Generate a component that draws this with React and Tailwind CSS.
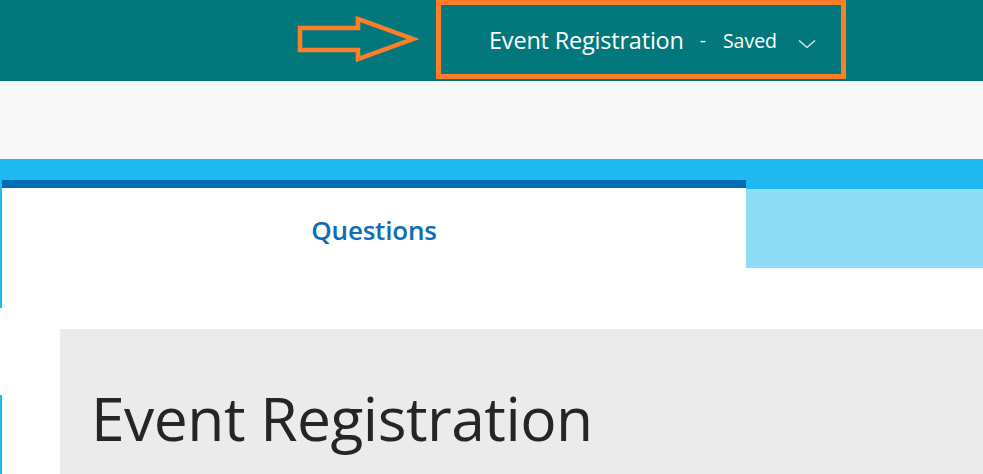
import React from 'react';

const font = { fontFamily: '"Open Sans", "Noto Sans", sans-serif' };

function Chevron() {
  return (
    <svg width="18" height="10" viewBox="0 0 18 10" fill="none" className="ml-[21px] mt-[6px]">
      <path d="M1 1.5 L9 8.5 L17 1.5" stroke="#e8f4f4" strokeWidth="1.3" />
    </svg>
  );
}

function Arrow() {
  return (
    <svg width="130" height="50" viewBox="0 0 130 50" fill="none" className="mt-[14px] ml-[296px]">
      {/* outline arrow pointing at the title */}
      <path
        d="M4 14 L62 14 L62 5 L117 25 L62 45 L62 36 L4 36 Z"
        stroke="#fe7f27"
        strokeWidth="4.5"
        strokeLinejoin="miter"
      />
    </svg>
  );
}

export default function App() {
  return (
    <div className="h-[474px] w-[983px] overflow-hidden bg-white" style={font}>
      {/* Header */}
      <div className="h-[81px] bg-[#03787c] flex items-start">
        <Arrow />
        <div className="ml-[10px] h-[79px] w-[410px] border-[5px] border-[#fe7f27] flex items-center pl-[48px] pt-[2px] text-white">
          <span className="text-[23.5px] tracking-[-0.2px]">Event Registration</span>
          <span className="ml-[16px] text-[19px]">-</span>
          <span className="ml-[17px] text-[19.5px]">Saved</span>
          <Chevron />
        </div>
      </div>

      {/* Toolbar strip */}
      <div className="h-[78px] bg-[#f8f8f8]" />

      {/* Body */}
      <div className="flex h-[315px]">
        <div className="w-[2px] flex flex-col">
          <div className="h-[149px] bg-[#1eb9ee]" />
          <div className="h-[87px] bg-white" />
          <div className="flex-1 bg-[#1eb9ee]" />
        </div>

        <div className="flex-1 flex flex-col">
          <div className="h-[21px] bg-[#1eb9ee]" />
          <div className="flex h-[88px]">
            <div className="w-[744px] bg-white border-t-[8px] border-[#006cb2] flex items-center justify-center pt-[4px]">
              <span className="text-[26px] font-semibold text-[#0f6cb5] tracking-[-0.2px]">Questions</span>
            </div>
            <div className="flex-1 flex flex-col">
              <div className="h-[9px] bg-[#1eb9ee]" />
              <div className="flex-1 bg-[#8fdcf6]" />
            </div>
          </div>
          <div className="h-[61px]" />
          <div className="ml-[58px] flex-1 bg-[#ebebeb] pl-[31px] pt-[59px]">
            <h1 className="text-[60.5px] leading-none text-[#252525] tracking-[-0.5px]">Event Registration</h1>
          </div>
        </div>
      </div>
    </div>
  );
}
